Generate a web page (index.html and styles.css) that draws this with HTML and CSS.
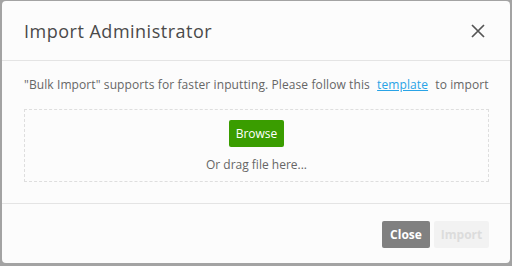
FILE: index.html
```html
<!DOCTYPE html>
<html>
    <head>
        <title>Import Administrator</title>
        <link rel="stylesheet" href="styles.css">
    </head>
    <body>
        <div class="modal">
            <div class="modal-header">
                <h1>Import Administrator</h1>
                <button class="close-x" aria-label="close">
                    <svg width="14" height="14" viewBox="0 0 14 14">
                        <path d="M1 1 L13 13 M13 1 L1 13" stroke="#555" stroke-width="1.7" fill="none"/>
                    </svg>
                </button>
            </div>
            <div class="modal-body">
                <p class="intro">"Bulk Import" supports for faster inputting. Please follow this <a href="#">template</a> to import</p>
                <div class="drop-zone">
                    <button class="btn-browse">Browse</button>
                    <span class="drop-hint">Or drag file here...</span>
                </div>
            </div>
            <div class="modal-footer">
                <button class="btn btn-close">Close</button>
                <button class="btn btn-import" disabled>Import</button>
            </div>
        </div>
    </body>
</html>
```
FILE: styles.css
```css
body {
    margin: 0;
    padding: 1px 2px 0 2px;
    background-color: #a3a3a3;
    font-family: "Open Sans", Arial, sans-serif;
}
.modal {
    width: 508px;
    height: 262px;
    background-color: #fcfcfc;
    border-radius: 4px;
    display: flex;
    flex-direction: column;
}
.modal-header {
    height: 59px;
    padding: 0 25px 0 22px;
    display: flex;
    align-items: center;
    justify-content: space-between;
    border-bottom: 1px solid #e4e4e4;
}
.modal-header h1 {
    margin: 0;
    font-size: 18px;
    font-weight: normal;
    color: #4a4a4a;
    letter-spacing: 0.5px;
}
.close-x {
    border: none;
    background: none;
    padding: 0;
    display: flex;
    cursor: pointer;
}
.modal-body {
    padding: 16px 21px 21px 22px;
    border-bottom: 1px solid #e4e4e4;
}
.intro {
    margin: 0;
    font-size: 12px;
    line-height: 16px;
    color: #666;
    white-space: nowrap;
    letter-spacing: 0.1px;
}
.intro a {
    color: #29a3e6;
    margin: 0 4px;
}
.drop-zone {
    margin-top: 16px;
    border: 1px dashed #dedede;
    display: flex;
    flex-direction: column;
    align-items: center;
    padding-top: 10px;
    height: 61px;
}
.btn-browse {
    width: 55px;
    height: 27px;
    border: none;
    border-radius: 2px;
    background-color: #3a9d00;
    color: #fff;
    font-family: inherit;
    font-size: 12px;
    padding: 0;
}
.drop-hint {
    margin-top: 9px;
    font-size: 12px;
    color: #666;
}
.modal-footer {
    flex: 1;
    display: flex;
    justify-content: flex-end;
    align-items: flex-start;
    gap: 4px;
    padding: 17px 21px 0 0;
}
.btn {
    height: 27px;
    border: none;
    border-radius: 2px;
    font-family: inherit;
    font-size: 12px;
    font-weight: bold;
    padding: 0;
}
.btn-close {
    width: 48px;
    background-color: #808080;
    color: #fff;
}
.btn-import {
    width: 55px;
    background-color: #f2f2f2;
    color: #dcdcdc;
}
```
